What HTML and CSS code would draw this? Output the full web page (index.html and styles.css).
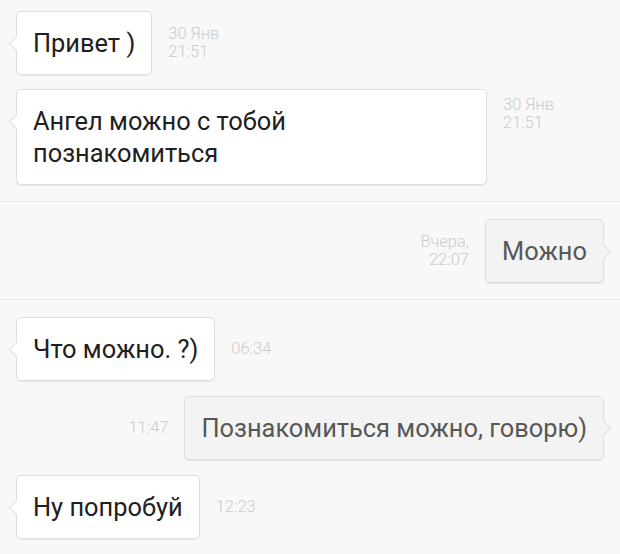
FILE: index.html
```html
<!DOCTYPE html>
<html>
  <head>
    <title>Диалог</title>
    <link rel="stylesheet" href="styles.css">
  </head>

  <body>
    <div class="chat">
      <section class="day day-first">
        <div class="msg">
          <div class="bubble">Привет )</div>
          <div class="time">30 Янв<br>21:51</div>
        </div>
        <div class="msg msg-top">
          <div class="bubble bubble-wide">Ангел можно с тобой познакомиться</div>
          <div class="time">30 Янв<br>21:51</div>
        </div>
      </section>

      <section class="day">
        <div class="msg msg-out">
          <div class="time">Вчера,<br>22:07</div>
          <div class="bubble">Можно</div>
        </div>
      </section>

      <section class="day day-last">
        <div class="msg">
          <div class="bubble">Что можно. ?)</div>
          <div class="time">06:34</div>
        </div>
        <div class="msg msg-out">
          <div class="time">11:47</div>
          <div class="bubble">Познакомиться можно, говорю)</div>
        </div>
        <div class="msg">
          <div class="bubble">Ну попробуй</div>
          <div class="time">12:23</div>
        </div>
      </section>
    </div>
  </body>
</html>
```

FILE: styles.css
```css
:root {
  --bg: #f8f8f8;
  --line: #e5e5e5;
  --bubble-border: #dedede;
}

body {
  margin: 0;
  background: var(--bg);
  font-family: Roboto, "Noto Sans", sans-serif;
}

.chat {
  width: 620px;
  height: 554px;
  overflow: hidden;
}

.day {
  display: flex;
  flex-direction: column;
  gap: 15px;
  padding: 16px 16px 16px;
  border-bottom: 1px solid var(--line);
  border-top: 1px solid #fff;
}
.day-first {
  padding-top: 11px;
  gap: 14px;
  border-top: 0;
}
.day-last {
  border-bottom: 0;
}

.msg {
  display: flex;
  align-items: center;
  gap: 16px;
}
.msg-out {
  justify-content: flex-end;
}
.msg-top .time {
  align-self: flex-start;
  margin-top: 7px;
}

.bubble {
  position: relative;
  background: #fff;
  border: 1px solid var(--bubble-border);
  border-radius: 5px;
  box-shadow: 0 1px 1px rgba(0, 0, 0, 0.07);
  padding: 15px 16px;
  font-size: 25.4px;
  line-height: 32px;
  color: #202020;
}
.bubble::before {
  content: "";
  position: absolute;
  top: 26px;
  left: -6px;
  width: 10px;
  height: 10px;
  background: inherit;
  border-left: 1px solid var(--bubble-border);
  border-bottom: 1px solid var(--bubble-border);
  transform: rotate(45deg);
}
.bubble-wide {
  width: 437px;
}

.msg-out .bubble {
  background: #f3f3f3;
  color: #575757;
}
.msg-out .bubble::before {
  left: auto;
  right: -6px;
  border-left: 0;
  border-bottom: 0;
  border-right: 1px solid var(--bubble-border);
  border-top: 1px solid var(--bubble-border);
}

.time {
  font-size: 16.5px;
  font-weight: 300;
  line-height: 18px;
  color: #cbcbcb;
}
.msg-out .time {
  text-align: right;
}
```
